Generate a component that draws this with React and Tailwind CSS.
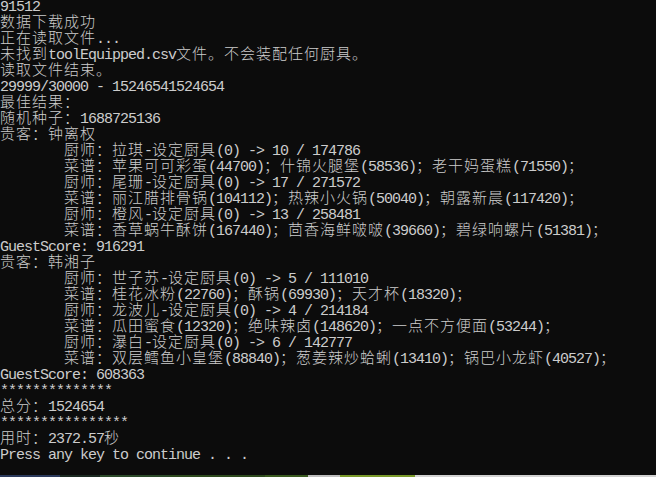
const T = '        '

const lines = [
  '91512',
  '数据下载成功',
  '正在读取文件...',
  '未找到toolEquipped.csv文件。不会装配任何厨具。',
  '读取文件结束。',
  '29999/30000 - 15246541524654',
  '最佳结果：',
  '随机种子：1688725136',
  '贵客：钟离权',
  T + '厨师：拉琪-设定厨具(0) -> 10 / 174786',
  T + '菜谱：苹果可可彩蛋(44700)；什锦火腿堡(58536)；老干妈蛋糕(71550)；',
  T + '厨师：尾珊-设定厨具(0) -> 17 / 271572',
  T + '菜谱：丽江腊排骨锅(104112)；热辣小火锅(50040)；朝露新晨(117420)；',
  T + '厨师：橙风-设定厨具(0) -> 13 / 258481',
  T + '菜谱：香草蜗牛酥饼(167440)；茴香海鲜啵啵(39660)；碧绿响螺片(51381)；',
  'GuestScore: 916291',
  '贵客：韩湘子',
  T + '厨师：世子苏-设定厨具(0) -> 5 / 111010',
  T + '菜谱：桂花冰粉(22760)；酥锅(69930)；天才杯(18320)；',
  T + '厨师：龙波儿-设定厨具(0) -> 4 / 214184',
  T + '菜谱：瓜田蜜食(12320)；绝味辣卤(148620)；一点不方便面(53244)；',
  T + '厨师：瀑白-设定厨具(0) -> 6 / 142777',
  T + '菜谱：双层鳕鱼小皇堡(88840)；葱姜辣炒蛤蜊(13410)；锅巴小龙虾(40527)；',
  'GuestScore: 608363',
  '**************',
  '总分：1524654',
  '****************',
  '用时：2372.57秒',
  'Press any key to continue . . .',
]

// split a line into half-width (ascii) and full-width runs
function runs(text) {
  const out = []
  for (const ch of text) {
    const wide = ch.charCodeAt(0) > 0x7f
    const last = out[out.length - 1]
    if (last && last.wide === wide) last.text += ch
    else out.push({ wide, text: ch })
  }
  return out
}

function Line({ text }) {
  return (
    <div className="h-4 leading-4 whitespace-pre">
      {runs(text).map((r, i) =>
        r.wide ? (
          <span key={i} className="font-['Noto_Sans_CJK_SC',sans-serif] font-light text-[15px] tracking-[1px]">
            {r.text}
          </span>
        ) : (
          <span key={i} className="font-['Liberation_Mono',monospace] text-[15px] tracking-[-1px]">
            {r.text}
          </span>
        )
      )}
    </div>
  )
}

export default function App() {
  return (
    <div className="w-[656px] h-[477px] bg-[#0c0c0c] text-[#cccccc] flex flex-col overflow-hidden">
      <div className="flex-1 -mt-[3px]">
        {lines.map((l, i) => (
          <Line key={i} text={l} />
        ))}
      </div>
      <div className="h-[2px] flex">
        <div className="w-[60px] bg-[#2b3a5c]" />
        <div className="w-[40px] bg-[#1c2a22]" />
        <div className="w-[70px] bg-[#2c4a2a]" />
        <div className="w-[95px] bg-[#2e4a1e]" />
        <div className="w-[43px] bg-[#3a5a20]" />
        <div className="w-[32px] bg-[#bdbdbd]" />
        <div className="w-[75px] bg-[#7a9a2a]" />
        <div className="flex-1 bg-[#d2d2d2]" />
      </div>
    </div>
  )
}
